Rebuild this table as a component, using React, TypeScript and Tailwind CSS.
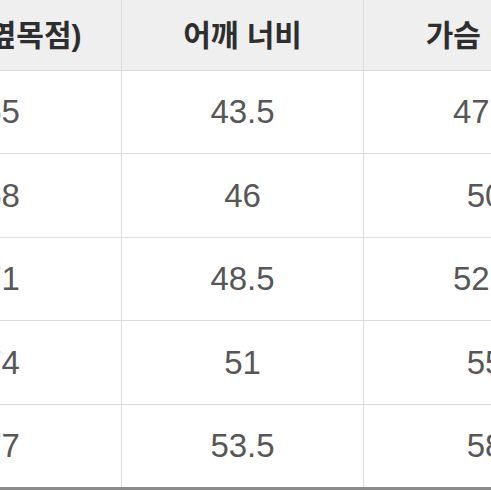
const headers = ["총장(옆목점)", "어깨 너비", "가슴 단면"];

const rows = [
  { h: "h-[83px]", cells: ["65", "43.5", "47.5"] },
  { h: "h-[84px]", cells: ["68", "46", "50"] },
  { h: "h-[83px]", cells: ["71", "48.5", "52.5"] },
  { h: "h-[84px]", cells: ["74", "51", "55"] },
  { h: "h-[85px]", cells: ["77", "53.5", "58"] },
];

export default function App() {
  return (
    <div className="w-[491px] h-[491px] overflow-hidden bg-white">
      <div
        className="ml-[-120px] w-[726px]"
        style={{ fontFamily: '"Liberation Sans", "Noto Sans CJK KR", sans-serif' }}
      >
        <div className="grid grid-cols-[242px_242px_242px] h-[71px] bg-[#efefef] border-b border-[#d9d9d9]">
          {headers.map((h, i) => (
            <div
              key={h}
              className={`flex items-center justify-center text-[30px] font-bold text-[#2e2e2e] ${
                i === 0 ? "pl-[4px]" : ""
              } ${i < 2 ? "border-r border-[#dcdcdc]" : ""}`}
            >
              {h}
            </div>
          ))}
        </div>
        {rows.map((r, ri) => (
          <div
            key={ri}
            className={`grid grid-cols-[242px_242px_242px] ${r.h} ${
              ri < rows.length - 1 ? "border-b border-[#dcdcdc]" : "border-b-[3px] border-[#8a8a8a]"
            }`}
          >
            {r.cells.map((v, i) => (
              <div
                key={i}
                className={`flex items-center justify-center text-[33px] text-[#575757] ${
                  i === 0 ? "pl-[2px]" : ""
                } ${i < 2 ? "border-r border-[#dcdcdc]" : ""}`}
              >
                {v}
              </div>
            ))}
          </div>
        ))}
      </div>
    </div>
  );
}
